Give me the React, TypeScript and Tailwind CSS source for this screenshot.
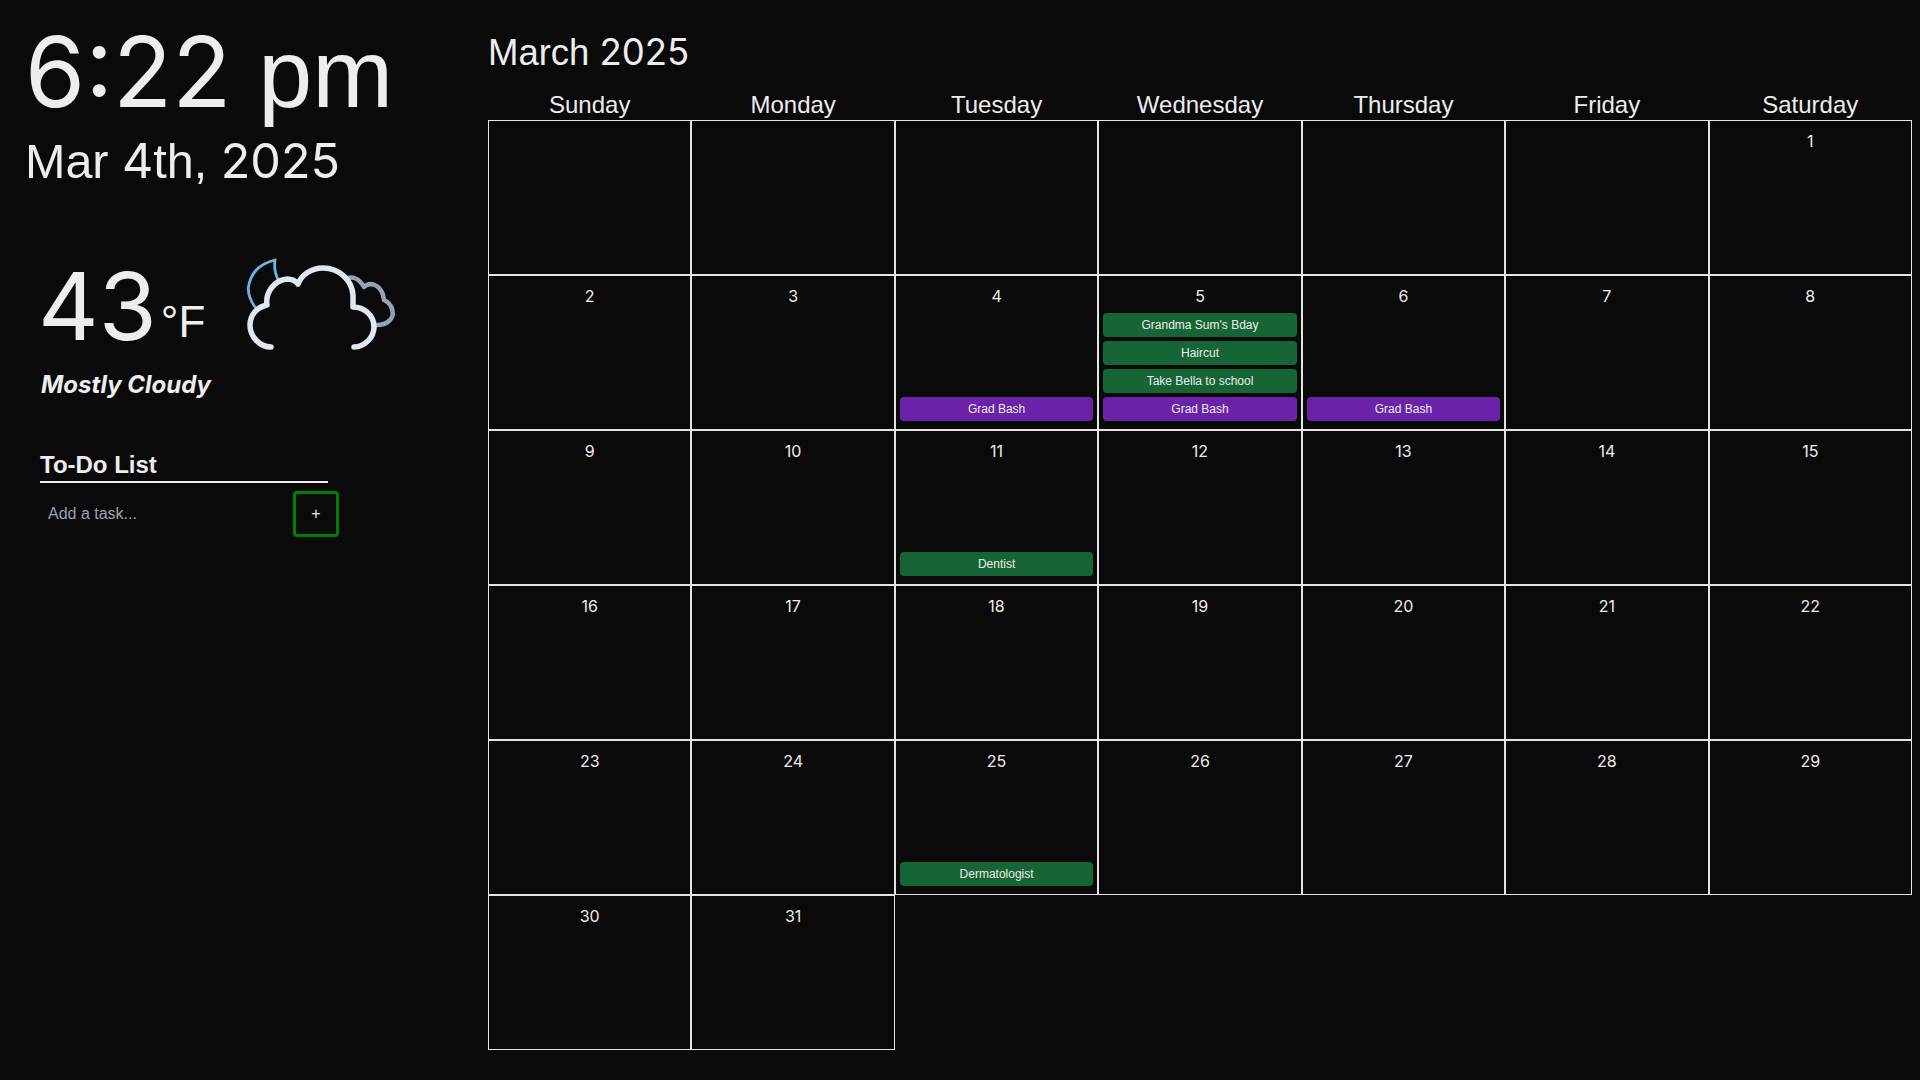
const days = ["Sunday","Monday","Tuesday","Wednesday","Thursday","Friday","Saturday"];
type Ev = { t: string; c: "g" | "p" };
const events: Record<number, Ev[]> = {
  4: [{ t: "Grad Bash", c: "p" }],
  5: [{ t: "Grandma Sum's Bday", c: "g" }, { t: "Haircut", c: "g" }, { t: "Take Bella to school", c: "g" }, { t: "Grad Bash", c: "p" }],
  6: [{ t: "Grad Bash", c: "p" }],
  11: [{ t: "Dentist", c: "g" }],
  25: [{ t: "Dermatologist", c: "g" }],
};
const inter = "font-['Inter',sans-serif]";
function WeatherIcon() {
  return (
    <svg width="180" height="120" viewBox="0 0 180 120" fill="none" strokeLinecap="round" strokeLinejoin="round" className="block">
      <path d="M25 67C20 60 17 52 19 44C22 31 32 23 45 20C44 28 45 35 49 41" stroke="#6cb4e0" strokeWidth="2.8" strokeLinejoin="miter" />
      <path d="M118 38C124 36 130 40 134 47C140 41 150 45 153 55L154 60C163 64 165 75 160 80C156 85 150 85 146 85" stroke="#94a3b8" strokeWidth="4.5" />
      <path d="M41 107C30 107 20 97 20 85C20 75 27 67 37 65C35 52 45 40 57 39C61 39 65 40 68 44C72 34 82 28 93 28C109 28 122 40 123 55L123 67C134 67 144 75 144 87C144 98 134 107 124 107" stroke="#dfe8f0" strokeWidth="5.5" />
    </svg>
  );
}
function Cell({ day }: { day?: number }) {
  const ev = day ? events[day] ?? [] : [];
  return (
    <div className="h-[155px] border border-[#e5e5e5] flex flex-col items-stretch px-1 pb-2 pt-[8px]">
      <div className="text-base leading-6 text-center h-6 text-[#ededed] font-['Inter',sans-serif]">{day}</div>
      <div className="flex-1 flex flex-col justify-end gap-1">
        {ev.map((e, i) => (
          <div key={i} className={`h-6 rounded-[4px] text-xs leading-6 text-center text-[#ededed] ${e.c === "g" ? "bg-[#166534]" : "bg-[#6b21a8]"}`}>{e.t}</div>
        ))}
      </div>
    </div>
  );
}
export default function App() {
  const cells: (number | undefined)[] = [...Array(6).fill(undefined), ...Array.from({ length: 31 }, (_, i) => i + 1)];
  return (
    <div className="w-[1920px] h-[1080px] overflow-hidden bg-[#0a0a0a] text-[#ededed] flex font-['Liberation_Sans',sans-serif]">
      <aside className="w-[488px] shrink-0 pl-[25px] pt-[16px] flex flex-col">
        <div className="text-[97px] leading-[112px]"><span className={inter}>6:22</span> pm</div>
        <div className="text-[48.5px] leading-[48px] mt-[7px]">Mar <span className={inter}>4</span>th, <span className={inter}>2025</span></div>
        <div className="flex items-start mt-[73px] pl-[13px]">
          <div className="flex items-end w-[189px] h-[96px]">
            <span className={`text-[94px] leading-[96px] ${inter}`}>43</span>
            <span className="text-[44px] leading-[48px] mb-[8px] ml-[4px]">°F</span>
          </div>
        </div>
        <div className="pl-[16px] text-2xl leading-8 font-bold italic mt-[15px] font-['Inter',sans-serif]">Mostly Cloudy</div>
        <div className="ml-[15px] w-[288px] border-b-2 border-[#ededed] text-2xl font-bold leading-8 mt-[48px]">To-Do List</div>
        <div className="flex items-center ml-[15px] mt-[8px] w-[325px]">
          <input placeholder="Add a task..." className="w-[253px] h-[46px] px-2 text-base outline-none bg-transparent placeholder:text-[#9ca3af]" />
          <button className="w-[46px] h-[46px] border-[3px] border-[#008000] rounded-[4px] text-base">+</button>
        </div>
      </aside>
      <main className="flex-1 pr-2 flex flex-col">
        <div className="text-[36.5px] leading-10 mt-[32px]">March <span className={inter}>2025</span></div>
        <div className="grid grid-cols-7 mt-[16px] h-[30px]">
          {days.map((d) => (
            <div key={d} className="text-2xl leading-8 text-center">{d}</div>
          ))}
        </div>
        <div className="grid grid-cols-7 mt-px">
          {cells.map((d, i) => <Cell key={i} day={d} />)}
        </div>
      </main>
      <div className="absolute left-[230px] top-[240px]"><WeatherIcon /></div>
    </div>
  );
}
